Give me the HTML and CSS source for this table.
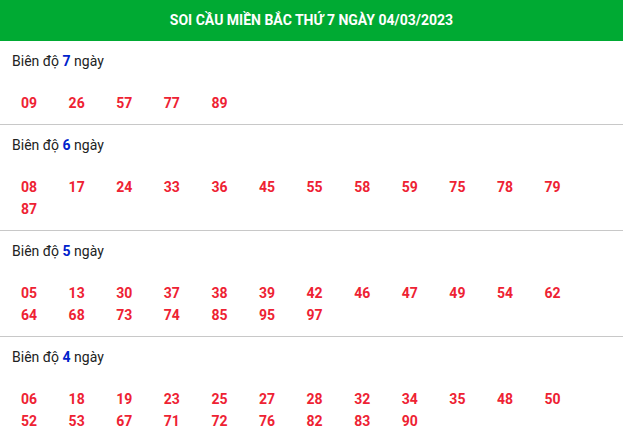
FILE: index.html
```html
<!DOCTYPE html>
<html lang="vi">
<head>
  <meta charset="UTF-8">
  <meta name="viewport" content="width=device-width, initial-scale=1.0">
  <title>Soi cầu miền Bắc thứ 7 ngày 04/03/2023</title>
  <link rel="stylesheet" href="styles.css">
</head>
<body>
  <div class="box">
    <h2 class="box-title">SOI CẦU MIỀN BẮC THỨ 7 NGÀY 04/03/2023</h2>

    <div class="bien-do">
      <p class="label">Biên độ <b>7</b> ngày</p>
      <div class="so">
        <span>09</span><span>26</span><span>57</span><span>77</span><span>89</span>
      </div>
    </div>

    <div class="bien-do">
      <p class="label">Biên độ <b>6</b> ngày</p>
      <div class="so">
        <span>08</span><span>17</span><span>24</span><span>33</span><span>36</span><span>45</span>
        <span>55</span><span>58</span><span>59</span><span>75</span><span>78</span><span>79</span>
        <span>87</span>
      </div>
    </div>

    <div class="bien-do">
      <p class="label">Biên độ <b>5</b> ngày</p>
      <div class="so">
        <span>05</span><span>13</span><span>30</span><span>37</span><span>38</span><span>39</span>
        <span>42</span><span>46</span><span>47</span><span>49</span><span>54</span><span>62</span>
        <span>64</span><span>68</span><span>73</span><span>74</span><span>85</span><span>95</span>
        <span>97</span>
      </div>
    </div>

    <div class="bien-do">
      <p class="label">Biên độ <b>4</b> ngày</p>
      <div class="so">
        <span>06</span><span>18</span><span>19</span><span>23</span><span>25</span><span>27</span>
        <span>28</span><span>32</span><span>34</span><span>35</span><span>48</span><span>50</span>
        <span>52</span><span>53</span><span>67</span><span>71</span><span>72</span><span>76</span>
        <span>82</span><span>83</span><span>90</span>
      </div>
    </div>
  </div>
</body>
</html>
```

FILE: styles.css
```css
* {
  box-sizing: border-box;
}

body {
  margin: 0;
  font-family: Roboto, "Noto Sans", sans-serif;
  background-color: #ffffff;
  color: #222222;
}

.box-title {
  margin: 0;
  height: 41px;
  line-height: 41px;
  background-color: #00aa33;
  color: #ffffff;
  text-align: center;
  font-family: Roboto, sans-serif;
  font-size: 14px;
  font-weight: bold;
}

.bien-do {
  padding: 9px 0 10px;
  border-bottom: 1px solid #c8c8c8;
}

.bien-do:last-child {
  border-bottom: none;
}

.label {
  margin: 0;
  padding-left: 12px;
  font-size: 14px;
  line-height: 22px;
}

.label b {
  color: #0022cc;
}

.so {
  display: flex;
  flex-wrap: wrap;
  margin-top: 20px;
  padding-left: 21px;
}

.so span {
  width: 47.6px;
  font-size: 14px;
  font-weight: bold;
  line-height: 22px;
  color: #ee2233;
}
```
